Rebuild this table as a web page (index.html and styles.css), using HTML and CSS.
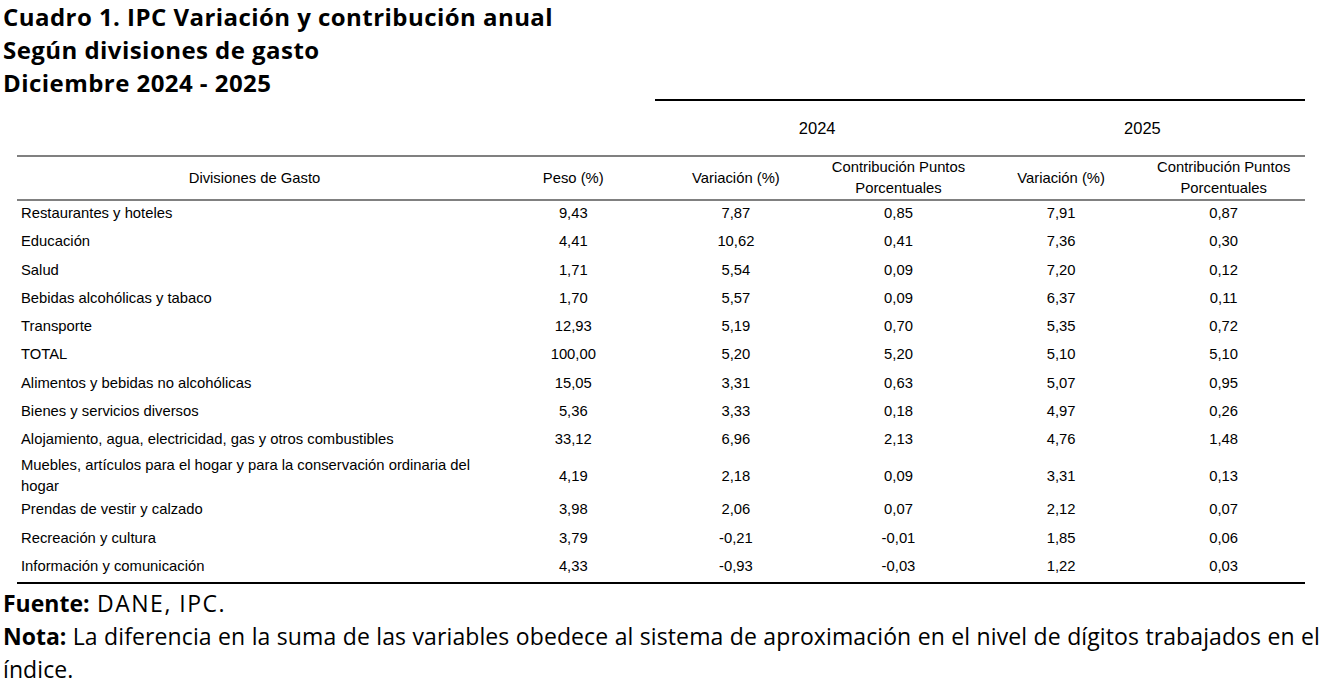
FILE: index.html
```html
<!DOCTYPE html>
<html lang="es">
<head>
<meta charset="utf-8">
<title>Cuadro 1. IPC</title>
<link rel="stylesheet" href="styles.css">
</head>
<body>
<div class="page">
  <h1 class="title">Cuadro 1. IPC Variación y contribución anual<br>Según divisiones de gasto<br>Diciembre 2024 - 2025</h1>
  <table class="tbl">
    <colgroup>
      <col class="c-label"><col class="c-num"><col class="c-num"><col class="c-num"><col class="c-num"><col class="c-num">
    </colgroup>
    <thead>
      <tr class="years">
        <th class="blank"></th><th class="blank"></th>
        <th colspan="2" class="year">2024</th>
        <th colspan="2" class="year">2025</th>
      </tr>
      <tr class="heads">
        <th>Divisiones de Gasto</th>
        <th>Peso (%)</th>
        <th>Variación (%)</th>
        <th>Contribución Puntos<br>Porcentuales</th>
        <th>Variación (%)</th>
        <th>Contribución Puntos<br>Porcentuales</th>
      </tr>
    </thead>
    <tbody>
      <tr><td>Restaurantes y hoteles</td><td>9,43</td><td>7,87</td><td>0,85</td><td>7,91</td><td>0,87</td></tr>
      <tr><td>Educación</td><td>4,41</td><td>10,62</td><td>0,41</td><td>7,36</td><td>0,30</td></tr>
      <tr><td>Salud</td><td>1,71</td><td>5,54</td><td>0,09</td><td>7,20</td><td>0,12</td></tr>
      <tr><td>Bebidas alcohólicas y tabaco</td><td>1,70</td><td>5,57</td><td>0,09</td><td>6,37</td><td>0,11</td></tr>
      <tr><td>Transporte</td><td>12,93</td><td>5,19</td><td>0,70</td><td>5,35</td><td>0,72</td></tr>
      <tr><td>TOTAL</td><td>100,00</td><td>5,20</td><td>5,20</td><td>5,10</td><td>5,10</td></tr>
      <tr><td>Alimentos y bebidas no alcohólicas</td><td>15,05</td><td>3,31</td><td>0,63</td><td>5,07</td><td>0,95</td></tr>
      <tr><td>Bienes y servicios diversos</td><td>5,36</td><td>3,33</td><td>0,18</td><td>4,97</td><td>0,26</td></tr>
      <tr><td>Alojamiento, agua, electricidad, gas y otros combustibles</td><td>33,12</td><td>6,96</td><td>2,13</td><td>4,76</td><td>1,48</td></tr>
      <tr class="tall"><td>Muebles, artículos para el hogar y para la conservación ordinaria del hogar</td><td>4,19</td><td>2,18</td><td>0,09</td><td>3,31</td><td>0,13</td></tr>
      <tr><td>Prendas de vestir y calzado</td><td>3,98</td><td>2,06</td><td>0,07</td><td>2,12</td><td>0,07</td></tr>
      <tr><td>Recreación y cultura</td><td>3,79</td><td>-0,21</td><td>-0,01</td><td>1,85</td><td>0,06</td></tr>
      <tr><td>Información y comunicación</td><td>4,33</td><td>-0,93</td><td>-0,03</td><td>1,22</td><td>0,03</td></tr>
    </tbody>
  </table>
  <div class="notes">
    <p class="note fuente"><b>Fuente:</b> DANE, IPC.</p>
    <p class="note nota"><b>Nota:</b> La diferencia en la suma de las variables obedece al sistema de aproximación en el nivel de dígitos trabajados en el índice.</p>
  </div>
</div>
</body>
</html>
```

FILE: styles.css
```css
html, body {
  margin: 0;
  padding: 0;
  background: #ffffff;
  color: #000000;
}

.page {
  padding: 0 2px 0 3px;
}

.title {
  margin: 0;
  font-family: "Open Sans", "Noto Sans", sans-serif;
  font-weight: 700;
  font-size: 24px;
  line-height: 33px;
  letter-spacing: 0.45px;
}

.tbl {
  margin: 0 0 0 14px;
  width: 1288px;
  border-collapse: collapse;
  table-layout: fixed;
  font-family: "Liberation Sans", Arial, sans-serif;
  font-size: 14.8px;
  color: #000;
}

.c-label { width: 475px; }
.c-num { width: 162.6px; }

.tbl th {
  font-weight: 400;
  padding: 0;
}

.years th {
  height: 54px;
}

.years .year {
  border-top: 2px solid #000;
  font-size: 16.5px;
  vertical-align: middle;
}

.heads th {
  border-top: 2px solid #808080;
  border-bottom: 2px solid #808080;
  height: 42px;
  line-height: 21px;
  text-align: center;
  vertical-align: middle;
}

.tbl td {
  height: 24.25px;
  padding: 0 0 4px 0;
  text-align: center;
  vertical-align: middle;
  line-height: 22px;
}

.tbl td:first-child {
  text-align: left;
  padding-left: 4px;
  padding-right: 20px;
}

.tbl tr.tall td {
  height: 42px;
  padding-bottom: 0;
  line-height: 21px;
}

.tbl tbody tr:last-child td {
  border-bottom: 2px solid #000;
}

.notes {
  margin-top: 3px;
  font-family: "Open Sans", "Noto Sans", sans-serif;
  font-size: 23px;
  line-height: 33px;
}

.note {
  margin: 0;
  text-align: justify;
}

.fuente {
  letter-spacing: 1.5px;
}

.nota {
  letter-spacing: 0.1px;
}

.note b {
  letter-spacing: 0;
}
```
